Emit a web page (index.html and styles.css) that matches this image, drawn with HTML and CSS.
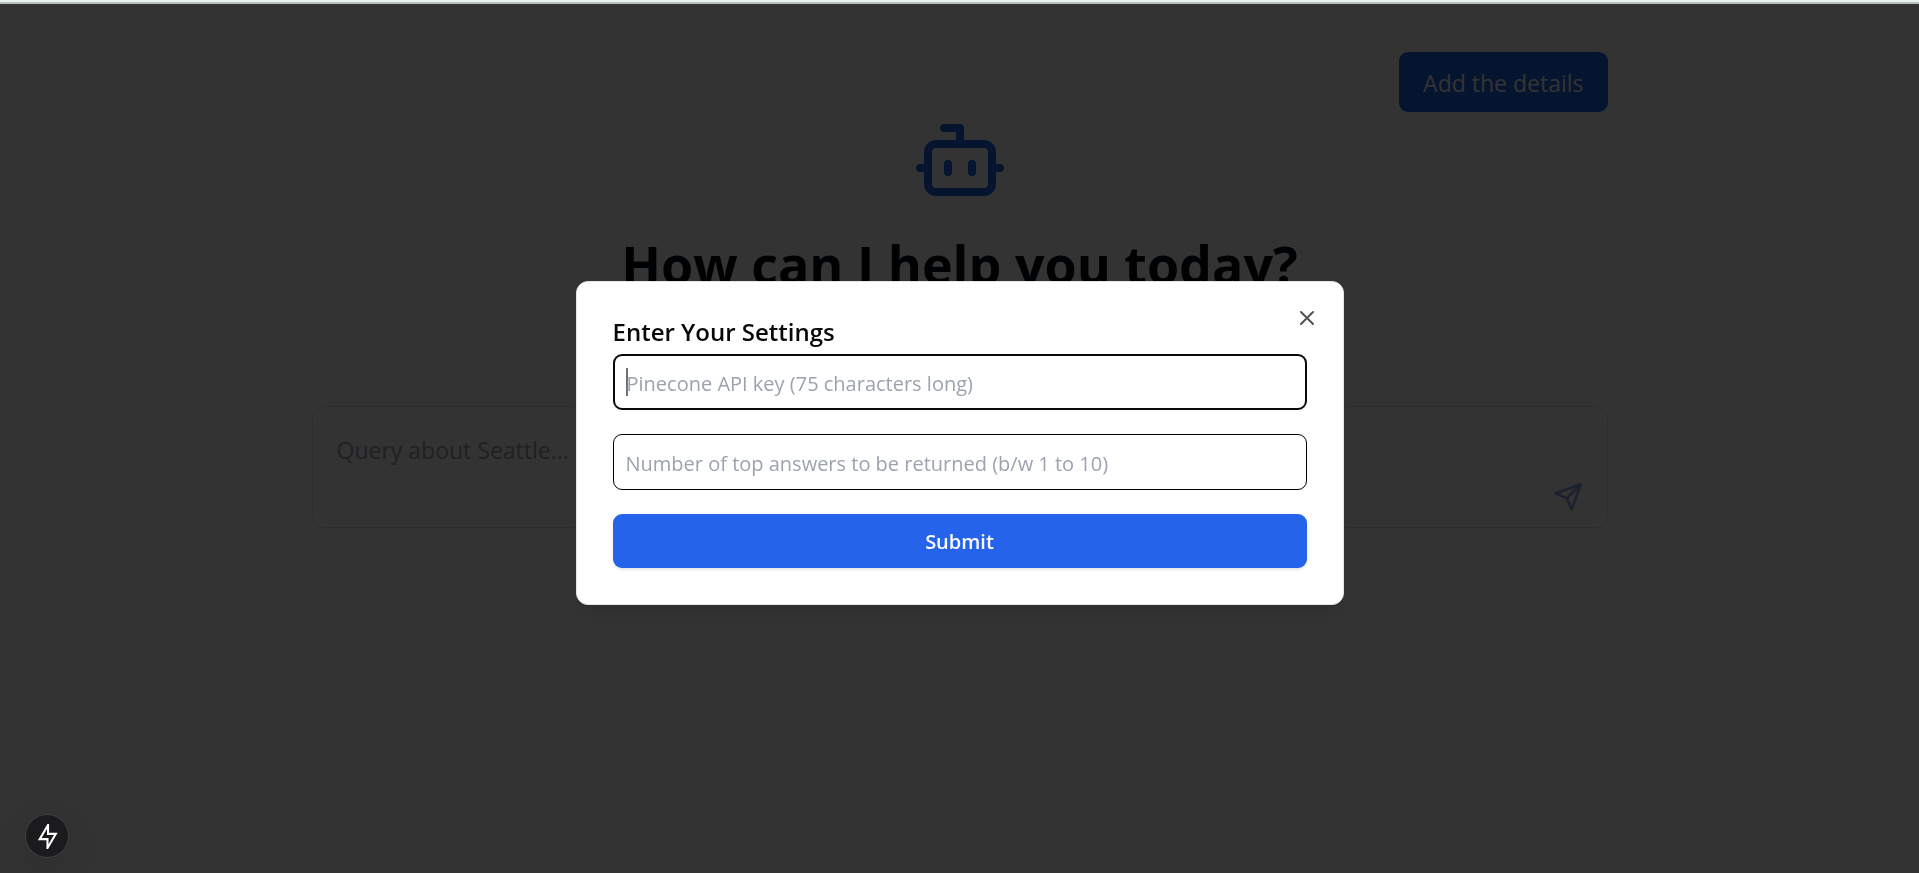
FILE: index.html
```html
<!DOCTYPE html>
<html lang="en">
<head>
<meta charset="utf-8">
<title>Assistant</title>
<link rel="stylesheet" href="styles.css">
</head>
<body>
<main class="page">
  <div class="toolbar"><button class="details-button" type="button">Add the details</button></div>
  <svg class="bot" viewBox="0 0 24 24" aria-hidden="true"><path d="M12 8V4H8"/><rect width="16" height="12" x="4" y="8" rx="2"/><path d="M2 14h2M20 14h2M15 13v2M9 13v2"/></svg>
  <h1 class="headline">How can I help you today?</h1>
  <form class="query">
    <textarea class="query-text" aria-label="Query" placeholder="Query about Seattle..."></textarea>
    <button class="send" type="button" aria-label="Send"><svg viewBox="0 0 24 24"><path d="m22 2-7 20-4-9-9-4Z"/><path d="M22 2 11 13"/></svg></button>
  </form>
</main>
<div class="overlay">
  <section class="dialog" role="dialog" aria-labelledby="dialog-title">
    <h2 class="dialog-title" id="dialog-title">Enter Your Settings</h2>
    <form class="settings">
      <input class="field field-active" type="text" aria-label="Pinecone API key" placeholder="Pinecone API key (75 characters long)">
      <input class="field" type="text" aria-label="Number of top answers" placeholder="Number of top answers to be returned (b/w 1 to 10)">
      <button class="submit" type="button">Submit</button>
    </form>
    <button class="close" type="button" aria-label="Close"><svg viewBox="0 0 24 24"><path d="M18 6 6 18M6 6l12 12"/></svg></button>
  </section>
</div>
<button class="dev-badge" type="button" aria-label="Developer tools"><svg viewBox="0 0 24 24"><path d="M12.500 1v8.500H20L12 23v-8.500H4.500z"/></svg></button>
</body>
</html>
```
FILE: styles.css
```css
* { box-sizing: border-box; }
body {
  margin: 0;
  min-height: 100vh;
  background: #fff;
  color: #030712;
  font-family: "Open Sans", "Noto Sans", sans-serif;
}
button, input, textarea { font: inherit; margin: 0; }
button { border: 0; padding: 0; cursor: pointer; }
svg { fill: none; stroke: currentColor; stroke-width: 2; stroke-linecap: round; stroke-linejoin: round; display: block; }

.page {
  max-width: 1344px;
  margin: 0 auto;
  padding: 52px 24px 0;
  display: flex;
  flex-direction: column;
  align-items: center;
}
.toolbar { align-self: stretch; display: flex; justify-content: flex-end; }
.details-button {
  height: 60px;
  padding: 2px 24px 0;
  border-radius: 9px;
  background: #1d64eb;
  color: #fff;
  font-size: 23px;
}
.bot { width: 96px; height: 96px; color: #1d64eb; }
.headline {
  margin: 24px 0 0;
  font-size: 52px;
  line-height: 64px;
  font-weight: 700;
}
.query {
  align-self: stretch;
  display: flex;
  align-items: flex-end;
  margin-top: 110px;
  padding: 0 24px 15px;
  height: 122px;
  border: 1px solid #e0e2e5;
  border-radius: 12px;
}
.query-text {
  flex: 1;
  height: 90px;
  padding: 10px 0 0;
  border: 0;
  outline: 0;
  resize: none;
  background: transparent;
  font-size: 23px;
  line-height: 36px;
}
.query-text::placeholder { color: #9ca3af; opacity: 1; }
.send { background: none; color: #1d4ed8; opacity: 0.5; }
.send svg { width: 30px; height: 30px; }

.overlay {
  position: fixed;
  inset: 0;
  display: flex;
  align-items: center;
  justify-content: center;
  padding-top: 10px;
  background: rgba(0, 0, 0, 0.8);
  background-clip: padding-box;
  border-top: 2px solid #eeefef;
}
.overlay::before {
  content: "";
  position: absolute;
  inset: 0 0 auto;
  height: 2px;
  background: #b6c1bc;
}
.dialog {
  position: relative;
  width: 768px;
  max-width: 100%;
  padding: 36px;
  border: 1px solid #e4e4e7;
  border-radius: 12px;
  background: #fff;
  color: #09090b;
  box-shadow: 0 15px 23px -5px rgba(0, 0, 0, 0.1), 0 6px 9px -6px rgba(0, 0, 0, 0.1);
}
.dialog-title {
  margin: 0;
  font-size: 24px;
  line-height: 28px;
  font-weight: 600;
}
.settings { display: grid; gap: 24px; margin-top: 8px; }
.field {
  width: 100%;
  height: 56px;
  padding: 3px 12px 0;
  border: 1px solid #000;
  border-radius: 9px;
  outline: 0;
  background: #fff;
  font-size: 20px;
}
.field::placeholder { color: #9ca3af; opacity: 1; }
.field-active {
  border: 2px solid #09090b;
  background: linear-gradient(#71717a, #71717a) 11px center / 2px 28px no-repeat #fff;
}
.submit {
  height: 54px;
  padding-top: 2px;
  border-radius: 9px;
  background: #2563eb;
  color: #fafafa;
  font-size: 20px;
  font-weight: 600;
  box-shadow: 0 2px 3px rgba(0, 0, 0, 0.1);
}
.close {
  position: absolute;
  top: 24px;
  right: 24px;
  background: none;
  color: #535354;
}
.close svg { width: 24px; height: 24px; }

.dev-badge {
  position: fixed;
  left: 25px;
  bottom: 15px;
  width: 44px;
  height: 44px;
  display: grid;
  place-items: center;
  border: 1px solid #404040;
  border-radius: 50%;
  background: #1b1b1d;
  color: #fff;
  box-shadow: 0 12px 36px rgba(0, 0, 0, 0.12);
}
.dev-badge svg { width: 25px; height: 25px; stroke-linejoin: miter; }
```
